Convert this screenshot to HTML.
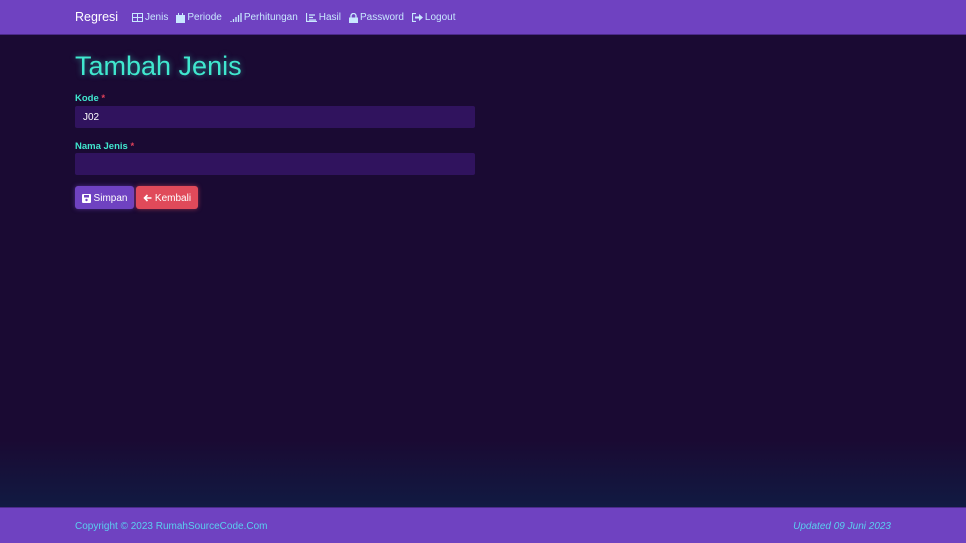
<!DOCTYPE html>
<html><head><meta charset="utf-8"><style>
*{box-sizing:border-box;margin:0;padding:0}
body{width:966px;height:543px;overflow:hidden;font-family:"Liberation Sans",sans-serif;background:linear-gradient(to bottom,#1a0a33 0,#1a0a33 440px,#111a42 507px);position:relative}
.nav{position:absolute;top:0;left:0;width:966px;height:35px;background:#6f42c1;border-bottom:1px solid #4b2a8a}
.brand{position:absolute;left:75px;top:10px;color:#fff;font-size:12.5px}
.links{position:absolute;left:132px;top:12px;font-size:10px;color:#c8e8ff;display:flex;gap:8px;align-items:center}
.links span{display:flex;align-items:center;gap:2px}
h1{position:absolute;left:75px;top:51px;font-size:27px;font-weight:normal;color:#40e8cf;text-shadow:0 0 6px rgba(64,232,207,.5)}
label{position:absolute;left:75px;font-size:9.5px;font-weight:bold;color:#40e8cf}
label b{color:#e0405a}
.inp{position:absolute;left:75px;width:400px;height:22px;background:#30135e;color:#fff;font-size:10px;padding:6px 8px;border-radius:2px}
.btn{position:absolute;top:186px;height:23px;font-size:10px;color:#fff;border-radius:3px;display:flex;align-items:center;justify-content:center;gap:3px;padding-top:1px}
.foot{position:absolute;top:507px;left:0;width:966px;height:36px;background:#6f42c1;border-top:1px solid #4b2a8a;font-size:10px;color:#5ad0f0}
</style></head><body>
<div class="nav">
<div class="brand">Regresi</div>
<div class="links">
<span><svg width="11" height="9" viewBox="0 0 11 9"><rect x=".5" y=".5" width="10" height="8" fill="none" stroke="#c8e8ff"/><path d="M5.5 0v9M0 4.5h11" stroke="#c8e8ff"/></svg>Jenis</span>
<span><svg width="9" height="10" viewBox="0 0 9 10"><rect x="0" y="2" width="9" height="8" fill="#c8e8ff"/><rect x="2" y="0" width="1" height="3" fill="#c8e8ff"/><rect x="6" y="0" width="1" height="3" fill="#c8e8ff"/></svg>Periode</span>
<span><svg width="12" height="9" viewBox="0 0 12 9"><path d="M1 9v-1M3.5 9v-3M6 9v-5M8.5 9v-7M11 9v-9" stroke="#c8e8ff" stroke-width="1.3"/></svg>Perhitungan</span>
<span><svg width="11" height="9" viewBox="0 0 11 9"><path d="M.5 0v8.5h10.5M3 2h6M3 4.5h4M3 7h7" stroke="#c8e8ff" stroke-width="1.2" fill="none"/></svg>Hasil</span>
<span><svg width="9" height="10" viewBox="0 0 9 10"><path d="M2 4.5V3a2.5 2.5 0 0 1 5 0v1.5" stroke="#c8e8ff" stroke-width="1.3" fill="none"/><rect x="0" y="4.5" width="9" height="5.5" fill="#c8e8ff"/></svg>Password</span>
<span><svg width="11" height="9" viewBox="0 0 11 9"><path d="M4 .5H.5v8H4" stroke="#c8e8ff" stroke-width="1.2" fill="none"/><path d="M3 3.5h4V1l4 3.5-4 3.5V5.5H3z" fill="#c8e8ff"/></svg>Logout</span>
</div></div>
<h1>Tambah Jenis</h1>
<label style="top:93px">Kode <b>*</b></label>
<div class="inp" style="top:106px">J02</div>
<label style="top:141px">Nama Jenis <b>*</b></label>
<div class="inp" style="top:153px"></div>
<div class="btn" style="left:75px;width:59px;background:#6f42c1;box-shadow:0 0 5px rgba(111,66,193,.6)"><svg width="9" height="9" viewBox="0 0 9 9"><rect width="9" height="9" rx="1" fill="#fff"/><rect x="2" y="1" width="5" height="2.5" fill="#6f42c1"/><circle cx="4.5" cy="6" r="1.2" fill="#6f42c1"/></svg>Simpan</div>
<div class="btn" style="left:136px;width:62px;background:#e04a5a;box-shadow:0 0 5px rgba(224,74,90,.6)"><svg width="9" height="8" viewBox="0 0 9 8"><path d="M8.5 4H1.5M4.5 1L1.5 4l3 3" stroke="#fff" stroke-width="1.6" fill="none"/></svg>Kembali</div>
<div class="foot"><span style="position:absolute;left:75px;top:13px">Copyright © 2023 RumahSourceCode.Com</span><span style="position:absolute;right:75px;top:13px;font-style:italic">Updated 09 Juni 2023</span></div>
</body></html>
